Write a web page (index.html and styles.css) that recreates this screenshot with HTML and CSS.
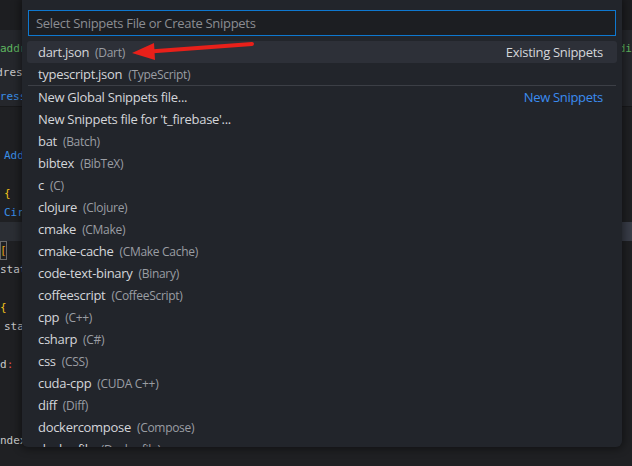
FILE: index.html
```html
<!DOCTYPE html>
<html>
<head>
<meta charset="utf-8">
<link rel="stylesheet" href="styles.css">
</head>
<body>
<div class="editor">
  <div class="tabbar"></div>
  <div class="sticky">
    <div class="sline"><span class="c-green">address</span><span class="c-green">di</span></div>
    <div class="sline"><span class="c-text shift">address</span><span></span></div>
    <div class="sline"><span class="c-blue shift2">address</span><span></span></div>
  </div>
  <div class="code">
    <div class="line"></div>
    <div class="line"></div>
    <div class="line"><span class="c-blue ind">Add</span></div>
    <div class="line"></div>
    <div class="line"><span class="c-yellow ind">{</span></div>
    <div class="line"><span class="c-blue ind">Circle</span></div>
    <div class="line current"><span></span><span class="ruler"></span></div>
    <div class="line"><span class="c-orange bracket">[</span></div>
    <div class="line"><span class="c-text">state</span></div>
    <div class="line"></div>
    <div class="line"><span class="c-yellow">{</span></div>
    <div class="line"><span class="c-text ind">state</span></div>
    <div class="line"></div>
    <div class="line"><span class="c-text">d<span class="c-red">:</span></span></div>
    <div class="line"></div>
    <div class="line"></div>
    <div class="line"></div>
    <div class="line"><span class="c-text">ndex</span></div>
  </div>
</div>

<div class="quickpick">
  <div class="qinput">Select Snippets File or Create Snippets</div>
  <div class="qlist">
    <div class="row selected"><span class="lbl">dart.json</span><span class="desc">(Dart)</span><span class="tag">Existing Snippets</span></div>
    <div class="row"><span class="lbl">typescript.json</span><span class="desc">(TypeScript)</span></div>
    <div class="row sep"><span class="lbl">New Global Snippets file...</span><span class="tag tag-blue">New Snippets</span></div>
    <div class="row"><span class="lbl">New Snippets file for 't_firebase'...</span></div>
    <div class="row"><span class="lbl">bat</span><span class="desc">(Batch)</span></div>
    <div class="row"><span class="lbl">bibtex</span><span class="desc">(BibTeX)</span></div>
    <div class="row"><span class="lbl">c</span><span class="desc">(C)</span></div>
    <div class="row"><span class="lbl">clojure</span><span class="desc">(Clojure)</span></div>
    <div class="row"><span class="lbl">cmake</span><span class="desc">(CMake)</span></div>
    <div class="row"><span class="lbl">cmake-cache</span><span class="desc">(CMake Cache)</span></div>
    <div class="row"><span class="lbl">code-text-binary</span><span class="desc">(Binary)</span></div>
    <div class="row"><span class="lbl">coffeescript</span><span class="desc">(CoffeeScript)</span></div>
    <div class="row"><span class="lbl">cpp</span><span class="desc">(C++)</span></div>
    <div class="row"><span class="lbl">csharp</span><span class="desc">(C#)</span></div>
    <div class="row"><span class="lbl">css</span><span class="desc">(CSS)</span></div>
    <div class="row"><span class="lbl">cuda-cpp</span><span class="desc">(CUDA C++)</span></div>
    <div class="row"><span class="lbl">diff</span><span class="desc">(Diff)</span></div>
    <div class="row"><span class="lbl">dockercompose</span><span class="desc">(Compose)</span></div>
    <div class="row"><span class="lbl">dockerfile</span><span class="desc">(Dockerfile)</span></div>
  </div>
</div>

<svg class="arrow" width="632" height="466" viewBox="0 0 632 466">
  <line x1="252" y1="44" x2="150" y2="51.5" stroke="#e8201a" stroke-width="4" stroke-linecap="round"/>
  <polygon points="132,53 154,43 155,60" fill="#e8201a"/>
</svg>
</body>
</html>
```

FILE: styles.css
```css
* { box-sizing: border-box; }
html, body { margin: 0; padding: 0; }
body {
  width: 632px;
  height: 466px;
  overflow: hidden;
  position: relative;
  background: #1f2023;
  font-family: "Open Sans", "Noto Sans", sans-serif;
}

.editor {
  display: flex;
  flex-direction: column;
  height: 466px;
  font-family: "DejaVu Sans Mono", "Liberation Mono", monospace;
  font-size: 11px;
}
.tabbar { height: 30px; background: #1d1e21; flex: none; }
.sticky {
  height: 77px;
  background: #25272c;
  border-bottom: 1px solid #18191b;
  flex: none;
  padding-top: 7px;
  overflow: hidden;
}
.sline {
  display: flex;
  justify-content: space-between;
  height: 24px;
  line-height: 24px;
  white-space: pre;
  overflow: hidden;
}
.shift { margin-left: -17px; }
.shift2 { margin-left: -20px; }
.code { padding-top: 1px; }
.line {
  display: flex;
  justify-content: space-between;
  height: 19px;
  line-height: 19px;
  white-space: pre;
}
.line.current { background: #2b2e34; }
.ruler { width: 10px; background: #393d48; }
.ind { padding-left: 4px; }

.c-green { color: #5fb760; }
.c-text { color: #c8c8c8; }
.c-blue { color: #3a8ee6; }
.c-yellow { color: #f2c21b; }
.c-orange { color: #e8a317; }
.c-red { color: #e0504e; }
.bracket { outline: 1px solid #6a6a6a; outline-offset: -1px; }

.quickpick {
  position: absolute;
  left: 22px;
  top: 0;
  width: 600px;
  height: 447px;
  background: #22252b;
  border-radius: 0 0 6px 6px;
  box-shadow: 0 0 8px 2px rgba(0, 0, 0, 0.45);
  padding: 10px 5px 0 5px;
  overflow: hidden;
  letter-spacing: -0.3px;
}
.qinput {
  margin: 0 1px;
  height: 26px;
  border: 1px solid #0e78d0;
  background: #1c1e22;
  color: #8b8d92;
  font-size: 13px;
  line-height: 24px;
  padding-left: 7px;
}
.qlist { margin-top: 5px; }
.row {
  display: flex;
  align-items: center;
  height: 22px;
  padding: 0 14px 0 11px;
  border-radius: 3px;
  color: #d4d6da;
  font-size: 13px;
  white-space: nowrap;
}
.row.selected { background: #2d3038; }
.row.sep {
  height: 23px;
  border-top: 1px solid #3c3f46;
  border-radius: 0;
  margin: 0 1px;
  padding-left: 10px;
  padding-right: 13px;
}
.desc {
  margin-left: 6px;
  font-size: 12px;
  color: #9a9da3;
}
.tag {
  margin-left: auto;
  color: #d4d6da;
}
.tag-blue { color: #3b8cf0; }

.arrow {
  position: absolute;
  left: 0;
  top: 0;
  pointer-events: none;
}
```
